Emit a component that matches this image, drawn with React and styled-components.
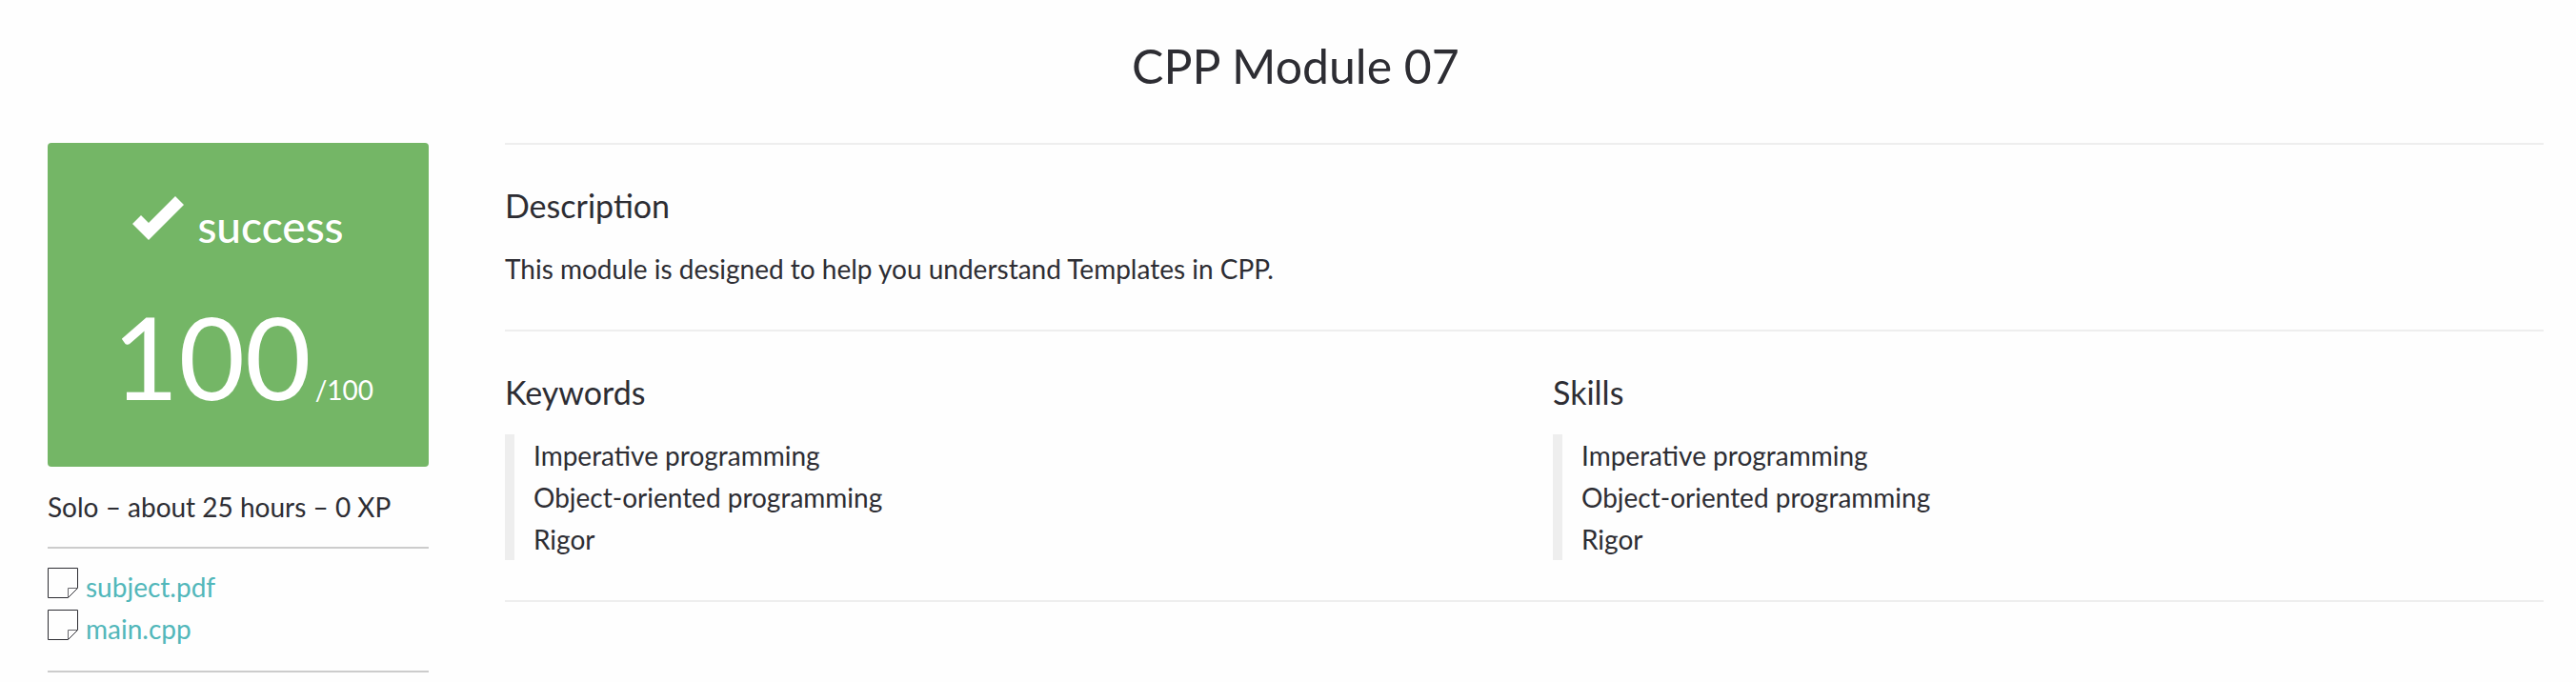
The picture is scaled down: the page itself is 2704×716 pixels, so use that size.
import React from "react";
import styled, { createGlobalStyle } from "styled-components";

const GlobalStyle = createGlobalStyle`
  *, *::before, *::after { box-sizing: border-box; }
  body {
    margin: 0;
    background: #fefefe;
    color: #2d2d33;
    font-family: Lato, "Liberation Sans", sans-serif;
    font-size: 28px;
    line-height: 44px;
  }
`;

const Page = styled.div`
  padding: 0 34px 10px 50px;
`;

const Title = styled.h1`
  margin: 0;
  padding: 33px 0 45px;
  font-size: 50px;
  font-weight: 400;
  line-height: 72px;
  text-align: center;
`;

const Columns = styled.div`
  display: flex;
  align-items: flex-start;
  gap: 80px;
`;

const Sidebar = styled.aside`
  flex: 0 0 400px;
`;

const Main = styled.main`
  flex: 1;
  min-width: 0;
  border-bottom: 2px solid #eee;
`;

const GradeCard = styled.div`
  display: flex;
  flex-direction: column;
  align-items: center;
  gap: 26px;
  height: 340px;
  padding-top: 50px;
  border-radius: 4px;
  background: #74b666;
  color: #fff;
`;

const Status = styled.div`
  display: flex;
  align-items: flex-start;
  gap: 14px;
  font-size: 46px;
  font-weight: 500;
  line-height: 76px;
`;

const Check = styled.svg`
  width: 54px;
  height: 46px;
  margin-top: 6px;
`;

const Score = styled.div`
  display: flex;
  align-items: baseline;
  gap: 4px;
  padding-left: 10px;
  font-size: 120px;
  line-height: 144px;
`;

const ScoreMax = styled.span`
  font-size: 28px;
`;

const Summary = styled.p`
  margin: 0;
  padding: 20px 0;
  white-space: nowrap;
`;

const Files = styled.ul`
  margin: 0;
  padding: 18px 0 22px;
  border: solid #ccc;
  border-width: 2px 0;
  list-style: none;
`;

const FileItem = styled.li`
  display: flex;
  align-items: flex-start;
  gap: 8px;
`;

const FileIcon = styled.svg`
  width: 32px;
  height: 32px;
  margin-top: 2px;
`;

const FileLink = styled.a`
  color: #52b7ba;
  text-decoration: none;
`;

const Section = styled.section`
  padding: 42px 0;
  border-top: 2px solid #eee;
`;

const Heading = styled.h2`
  margin: 0 0 22px;
  font-size: 34px;
  font-weight: 400;
  line-height: 44px;
`;

const Text = styled.p`
  margin: 0;
`;

const TopicGrid = styled(Section)`
  display: grid;
  grid-template-columns: 1fr 1fr;
  gap: 60px;
`;

const TopicList = styled.ul`
  margin: 0;
  padding: 0 0 0 20px;
  border-left: 10px solid #eee;
  list-style: none;
`;

const topics = ["Imperative programming", "Object-oriented programming", "Rigor"];

function Topics({ title, items }) {
  return (
    <div>
      <Heading>{title}</Heading>
      <TopicList>
        {items.map((item) => (
          <li key={item}>{item}</li>
        ))}
      </TopicList>
    </div>
  );
}

function File({ name }) {
  return (
    <FileItem>
      <FileIcon viewBox="0 0 32 32" fill="none" stroke="#2d2d33" aria-hidden="true">
        <path d="M.5 .5H31.5V21.5L21.5 31.5H.5Z" />
        <path d="M21.5 31.5V21.5H31.5" stroke="#66666b" />
      </FileIcon>
      <FileLink href="#">{name}</FileLink>
    </FileItem>
  );
}

export default function App() {
  return (
    <>
      <GlobalStyle />
      <Page>
        <Title>CPP Module 07</Title>
        <Columns>
          <Sidebar>
            <GradeCard>
              <Status>
                <Check viewBox="0 0 54 46" fill="#fff" aria-hidden="true">
                  <path d="M0 29L9 20L17 28L45 0L54 9L17 46Z" />
                </Check>
                success
              </Status>
              <Score>
                100<ScoreMax>/100</ScoreMax>
              </Score>
            </GradeCard>
            <Summary>Solo – about 25 hours – 0 XP</Summary>
            <Files>
              <File name="subject.pdf" />
              <File name="main.cpp" />
            </Files>
          </Sidebar>
          <Main>
            <Section>
              <Heading>Description</Heading>
              <Text>This module is designed to help you understand Templates in CPP.</Text>
            </Section>
            <TopicGrid>
              <Topics title="Keywords" items={topics} />
              <Topics title="Skills" items={topics} />
            </TopicGrid>
          </Main>
        </Columns>
      </Page>
    </>
  );
}
